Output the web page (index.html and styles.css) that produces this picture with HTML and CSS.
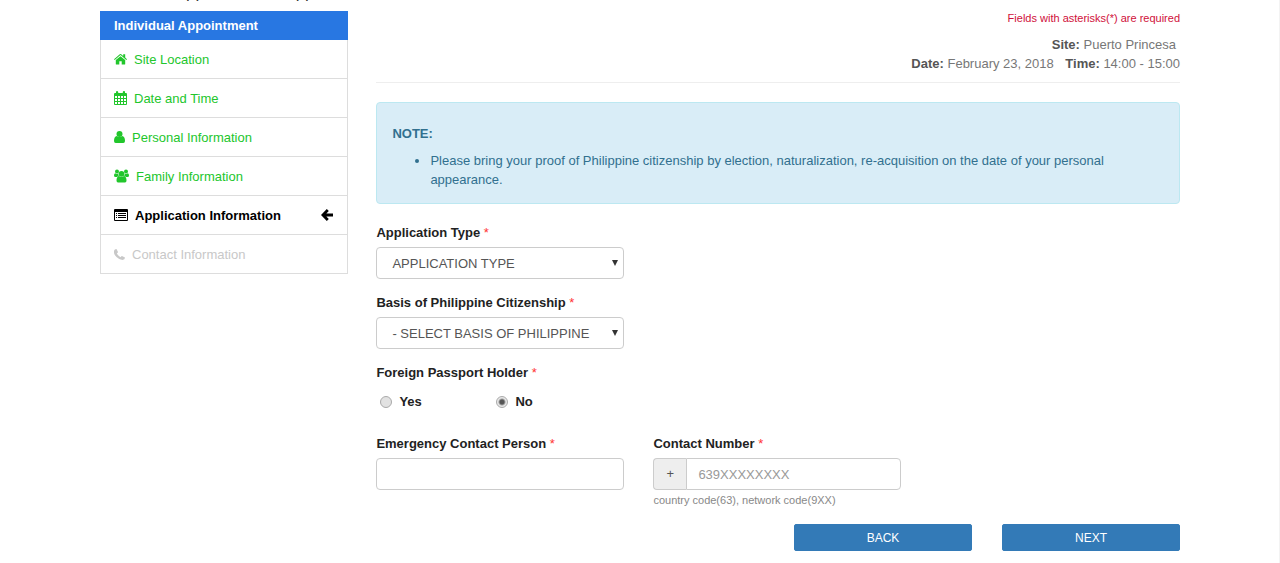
FILE: index.html
```html
<!DOCTYPE html>
<html lang="en">
<head>
<meta charset="UTF-8">
<meta name="viewport" content="width=device-width, initial-scale=1.0">
<title>Individual Appointment</title>
<link rel="stylesheet" href="styles.css">
</head>
<body>

<h1>Schedule Appointment - Application</h1>

<div class="container">

  <!-- steps -->
  <nav class="steps">
    <div class="steps-title">Individual Appointment</div>
    <a href="#" class="step done">
      <svg width="13" height="12" viewBox="0 0 13 12"><path fill="currentColor" d="M6.500 3.200L11.200 7V11Q11.200 11.600 10.600 11.600H7.700V8.200H5.300V11.600H2.400Q1.800 11.600 1.800 11V7ZM0 6.300L5.800 1.200Q6.500.600 7.200 1.200L9.200 2.900V1.200H11.200V4.600L13 6.300L12.300 7.100L6.500 2.100L.700 7.100Z"/></svg>
      <span>Site Location</span>
    </a>
    <a href="#" class="step done">
      <svg width="13" height="14" viewBox="0 0 13 14"><path fill="currentColor" fill-rule="evenodd" d="M1 2H2V1Q2 0 3 0T4.200 1V2H8.800V1Q8.800 0 10 0T11 1V2H12Q13 2 13 3V13Q13 14 12 14H1Q0 14 0 13V3Q0 2 1 2ZM1 5V7H3V5ZM4 5V7H6V5ZM7 5V7H9V5ZM10 5V7H12V5ZM1 8V10H3V8ZM4 8V10H6V8ZM7 8V10H9V8ZM10 8V10H12V8ZM1 11V13H3V11ZM4 11V13H6V11ZM7 11V13H9V11ZM10 11V13H12V11Z"/></svg>
      <span>Date and Time</span>
    </a>
    <a href="#" class="step done">
      <svg width="11" height="12" viewBox="0 0 11 12"><circle fill="currentColor" cx="5.500" cy="3" r="3"/><path fill="currentColor" d="M2.800 5Q5.500 7 8.200 5Q11 5.600 11 10Q11 12 9.300 12H1.700Q0 12 0 10Q0 5.600 2.800 5Z"/></svg>
      <span>Personal Information</span>
    </a>
    <a href="#" class="step done">
      <svg width="15" height="14" viewBox="0 0 15 14"><g fill="currentColor"><circle cx="3" cy="2.500" r="2"/><circle cx="12" cy="2.500" r="2"/><circle cx="7.500" cy="4.800" r="2.900"/><path d="M1.200 4.200Q3 5.500 4.200 4.500Q4 6 5 7Q3.500 7 3 8H1.500Q0 8 0 6.500Q0 4.500 1.200 4.200ZM13.800 4.200Q12 5.500 10.800 4.500Q11 6 10 7Q11.500 7 12 8H13.500Q15 8 15 6.500Q15 4.500 13.800 4.200ZM5 7Q7.500 8.800 10 7Q12.500 7.500 12.500 11.500Q12.500 13.500 11 13.500H4Q2.500 13.500 2.500 11.500Q2.500 7.500 5 7Z"/></g></svg>
      <span>Family Information</span>
    </a>
    <a href="#" class="step active">
      <svg width="14" height="12" viewBox="0 0 14 12"><path fill="currentColor" fill-rule="evenodd" d="M1 0H13Q14 0 14 1V11Q14 12 13 12H1Q0 12 0 11V1Q0 0 1 0ZM1 3V11H13V3ZM2 4H3V5H2ZM4 4H12V5H4ZM2 6H3V7H2ZM4 6H12V7H4ZM2 8H3V9H2ZM4 8H12V9H4Z"/></svg>
      <span>Application Information</span>
      <svg class="arrow" width="12" height="12" viewBox="0 0 12 12"><path fill="none" stroke="currentColor" stroke-width="2.800" d="M6.800 1L1.900 6L6.800 11M2 6H12"/></svg>
    </a>
    <a href="#" class="step disabled">
      <svg width="11" height="11" viewBox="0 0 11 11"><path fill="currentColor" d="M2.500 0L4 3Q4 3.600 2.800 4.500Q4.200 7 6.500 8.200Q7.500 7 8 7L11 8.600Q11 11 8.500 11Q5.500 11 2.500 8T0 2.500Q0 0 2.500 0Z"/></svg>
      <span>Contact Information</span>
    </a>
  </nav>

  <!-- application form -->
  <form class="content">
    <p class="required-note">Fields with asterisks(*) are required</p>
    <div class="schedule">
      <div class="site"><b>Site:</b> Puerto Princesa</div>
      <div><b>Date:</b> February 23, 2018 <b class="time">Time:</b> 14:00 - 15:00</div>
    </div>

    <div class="note">
      <strong>NOTE:</strong>
      <ul>
        <li>Please bring your proof of Philippine citizenship by election, naturalization, re-acquisition on the date of your personal appearance.</li>
      </ul>
    </div>

    <div class="fields">
      <div class="field first">
        <label for="appType">Application Type <i>*</i></label>
        <div class="select-box">
          <select id="appType"><option>APPLICATION TYPE</option></select>
        </div>
      </div>
      <div class="field first">
        <label for="basis">Basis of Philippine Citizenship <i>*</i></label>
        <div class="select-box">
          <select id="basis"><option>- SELECT BASIS OF PHILIPPINE</option></select>
        </div>
      </div>
      <fieldset class="field wide">
        <legend>Foreign Passport Holder <i>*</i></legend>
        <div class="radios">
          <label><input type="radio" name="holder" value="yes">Yes</label>
          <label><input type="radio" name="holder" value="no" checked>No</label>
        </div>
      </fieldset>
      <div class="field">
        <label for="person">Emergency Contact Person <i>*</i></label>
        <input type="text" id="person">
      </div>
      <div class="field">
        <label for="number">Contact Number <i>*</i></label>
        <div class="input-group">
          <span class="addon">+</span>
          <input type="text" id="number" placeholder="639XXXXXXXX">
        </div>
        <small>country code(63), network code(9XX)</small>
      </div>
    </div>

    <div class="buttons">
      <button type="button">BACK</button>
      <button type="button">NEXT</button>
    </div>
  </form>

</div>

</body>
</html>
```
FILE: styles.css
```css
* {
  box-sizing: border-box;
}

body {
  margin: 0;
  min-height: 100vh;
  border-right: 1px solid #f3f3f3;
  background-color: #fff;
  color: #222;
  font-family: "Liberation Sans", Arial, sans-serif;
  font-size: 13px;
  line-height: 19px;
  overflow: hidden;
}

/* page heading, scrolled up past the top edge */
h1 {
  margin: -19px 100px 0;
  color: #333;
  font-size: 17px;
  font-weight: normal;
  line-height: 24px;
}

.container {
  display: flex;
  align-items: flex-start;
  gap: 28px;
  padding: 6px 99px 0 100px;
}

/* left menu */
.steps {
  width: 23%;
  flex-shrink: 0;
  border: 1px solid #ddd;
  border-top: none;
}

.steps-title {
  margin: 0 -1px;
  padding: 5px 14px;
  background-color: #2877e2;
  color: #fff;
  font-weight: bold;
}

.step {
  display: flex;
  align-items: center;
  gap: 7px;
  height: 39px;
  padding: 0 14px 0 13px;
  border-bottom: 1px solid #ddd;
  text-decoration: none;
}

.step:last-child {
  height: 38px;
  border-bottom: none;
}

.done {
  color: #22c62c;
}

.active {
  color: #000;
  font-weight: bold;
}

.disabled {
  color: #c8c8c8;
}

.arrow {
  margin-left: auto;
}

/* right side */
.content {
  flex: 1;
  min-width: 0;
}

.required-note {
  margin: -2px 0 8px;
  color: #d0103a;
  font-size: 11px;
  line-height: 18px;
  text-align: right;
}

.schedule {
  padding-bottom: 9px;
  margin-bottom: 19px;
  border-bottom: 1px solid #eee;
  color: #777;
  text-align: right;
}

.schedule b {
  color: #555;
}

.site {
  padding-right: 4px;
}

.time {
  margin-left: 8px;
}

.note {
  padding: 21px 15px 14px;
  margin-bottom: 19px;
  border: 1px solid #bce8f1;
  border-radius: 4px;
  background-color: #d9edf7;
  color: #31708f;
}

.note ul {
  margin: 8px 0 0;
  padding-left: 38px;
}

/* form fields */
.fields {
  display: grid;
  grid-template-columns: 248px 248px;
  column-gap: 29px;
}

.first,
.wide {
  grid-column: 1 / 3;
}

.first {
  width: 248px;
  margin-bottom: 14px;
}

.field > label,
legend {
  display: block;
  margin-bottom: 5px;
  padding: 0;
  font-weight: bold;
}

.field i {
  color: #f33;
  font-style: normal;
  font-weight: normal;
}

fieldset {
  margin: 0 0 23px;
  padding: 0;
  border: none;
}

select,
input[type="text"] {
  display: block;
  width: 100%;
  height: 32px;
  padding: 0 11px;
  border: 1px solid #ccc;
  border-radius: 4px;
  background-color: #fff;
  color: #555;
  font-family: inherit;
  font-size: 13px;
}

input::placeholder {
  color: #999;
}

.select-box {
  position: relative;
}

select {
  appearance: none;
  padding: 0 20px 0 15px;
}

.select-box::after {
  content: "";
  position: absolute;
  top: 13px;
  right: 6px;
  border: 3px solid transparent;
  border-top: 6px solid #333;
  border-bottom: none;
}

.radios {
  display: flex;
  padding: 5px 0 0 4px;
}

.radios label {
  display: flex;
  align-items: center;
  gap: 7px;
  width: 116px;
  font-weight: bold;
}

input[type="radio"] {
  appearance: none;
  width: 12px;
  height: 12px;
  margin: 0;
  border: 1px solid #aaa;
  border-radius: 50%;
  background: #e2e2e2;
}

input[type="radio"]:checked {
  background: radial-gradient(circle, #555 2px, #e8e8e8 4px);
}

.input-group {
  display: flex;
}

.addon {
  width: 33px;
  flex-shrink: 0;
  border: 1px solid #ccc;
  border-right: none;
  border-radius: 4px 0 0 4px;
  background-color: #eee;
  color: #555;
  line-height: 30px;
  text-align: center;
}

.input-group input[type="text"] {
  border-radius: 0 4px 4px 0;
}

small {
  display: block;
  margin-top: 1px;
  color: #888;
  font-size: 11px;
}

.buttons {
  display: flex;
  justify-content: flex-end;
  gap: 30px;
  margin-top: 14px;
}

button {
  width: 178px;
  height: 27px;
  border: 1px solid #337ab7;
  border-radius: 2px;
  background-color: #337ab7;
  color: #fff;
  font-family: inherit;
  font-size: 12px;
}
```
